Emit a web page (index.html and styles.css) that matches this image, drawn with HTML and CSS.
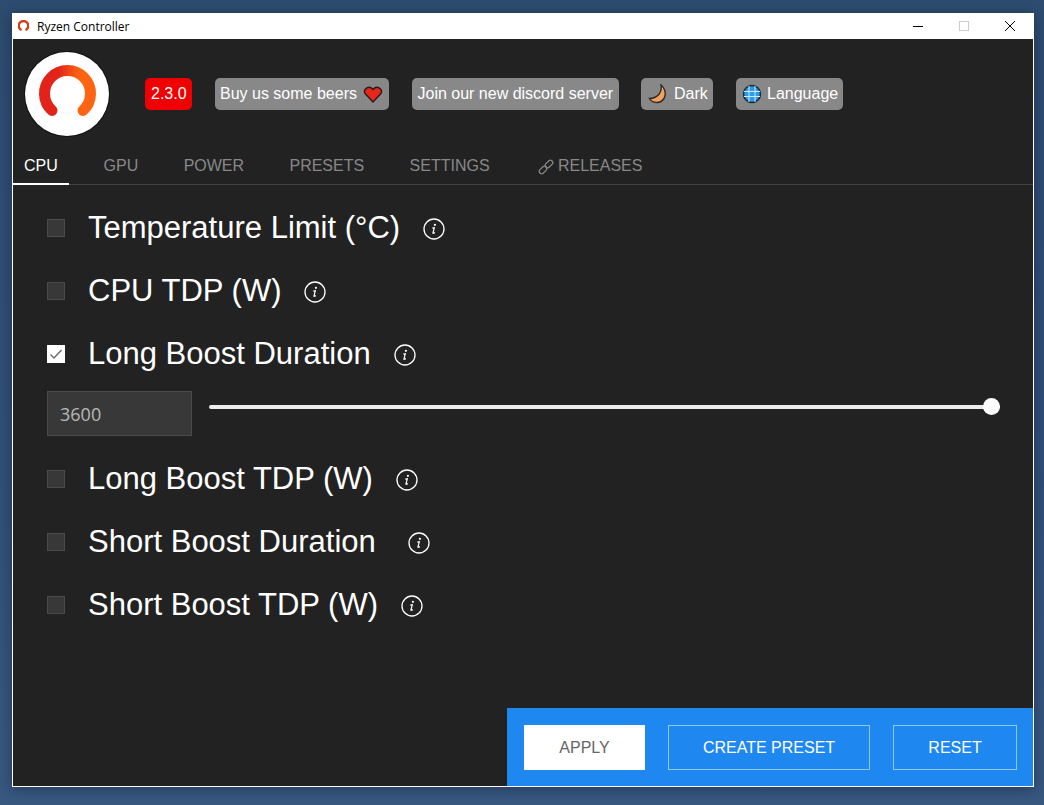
FILE: index.html
```html
<!DOCTYPE html>
<html lang="en">
<head>
<meta charset="utf-8">
<title>Ryzen Controller</title>
<link rel="stylesheet" href="styles.css">
</head>
<body>
<div class="window">
  <div class="titlebar">
    <svg class="title-icon" viewBox="0 0 60 60"><path d="M14 52 A26 26 0 1 1 46 52" fill="none" stroke="#d23c14" stroke-width="13" stroke-linecap="round"/></svg>
    <span class="title-text">Ryzen Controller</span>
    <div class="win-controls">
      <span class="win-btn"><svg width="10" height="10" viewBox="0 0 10 10"><path d="M0 5.5H10" stroke="#000"/></svg></span>
      <span class="win-btn"><svg width="10" height="10" viewBox="0 0 10 10"><rect x=".5" y=".5" width="9" height="9" fill="none" stroke="#ccc"/></svg></span>
      <span class="win-btn"><svg width="10" height="10" viewBox="0 0 10 10"><path d="M0 0L10 10M10 0L0 10" stroke="#000" stroke-width="1"/></svg></span>
    </div>
  </div>
  <header class="header">
    <div class="logo">
      <svg width="84" height="84" viewBox="0 0 84 84">
        <defs><linearGradient id="lg" x1="0" x2="1" y1="0" y2="0"><stop offset="0.3" stop-color="#e2231a"/><stop offset="0.75" stop-color="#ff6412"/></linearGradient></defs>
        <path d="M27 58.5 A23 23 0 1 1 58 58.5" fill="none" stroke="url(#lg)" stroke-width="11" stroke-linecap="round"/>
      </svg>
    </div>
    <div class="badges">
      <span class="badge badge-red">2.3.0</span>
      <span class="badge badge-beers">Buy us some beers
        <svg class="emoji" viewBox="0 0 20 20"><path d="M10 18 L2.3 9.8 C-0.5 5.5 5.8 0.5 10 5.5 C14.2 0.5 20.5 5.5 17.7 9.8 Z" fill="#e8261c" stroke="#2a1a1a" stroke-width="1.4"/></svg>
      </span>
      <span class="badge badge-join">Join our new discord server</span>
      <span class="badge badge-dark">
        <svg class="emoji" viewBox="0 0 20 20"><path d="M14 1 C15.5 8 11 14 2.5 14.5 C5.5 19.5 13.5 20 17 14.5 C19.5 9.5 18 4 14 1 Z" fill="#f7a05a" stroke="#2a2a2a" stroke-width="1.4"/></svg>
        Dark
      </span>
      <span class="badge badge-lang">
        <svg class="emoji" viewBox="0 0 20 20"><circle cx="10" cy="10" r="8.5" fill="#2b9be8" stroke="#1d2a35" stroke-width="1.5"/><path d="M2 7.5H18M2 12.5H18M7 2V18M13 2V18" stroke="#cfeafc" stroke-width="1"/></svg>
        Language
      </span>
    </div>
  </header>
  <nav class="tabs">
    <span class="tab tab-active">CPU</span>
    <span class="tab">GPU</span>
    <span class="tab">POWER</span>
    <span class="tab">PRESETS</span>
    <span class="tab">SETTINGS</span>
    <span class="tab tab-link">
      <svg class="link-icon" viewBox="0 0 16 16"><g fill="none" stroke="#888" stroke-width="1.3" transform="rotate(-45 8 8)"><rect x="-0.5" y="5.6" width="8.5" height="4.8" rx="2.4"/><rect x="8" y="5.6" width="8.5" height="4.8" rx="2.4"/></g></svg>
      RELEASES
    </span>
  </nav>
  <main class="content">
    <div class="row">
      <span class="check"></span><span class="label">Temperature Limit (°C)</span>
      <svg class="info" viewBox="0 0 22 22"><circle cx="11" cy="11" r="10" fill="none" stroke="#fff" stroke-width="1.3"/><circle cx="11.9" cy="6.8" r="1.1" fill="#fff"/><path d="M9.3 10.2 L11.3 9.8 L9.9 15 Q9.8 15.9 11.8 14.4" fill="none" stroke="#fff" stroke-width="1.2"/></svg>
    </div>
    <div class="row">
      <span class="check"></span><span class="label">CPU TDP (W)</span>
      <svg class="info" viewBox="0 0 22 22"><circle cx="11" cy="11" r="10" fill="none" stroke="#fff" stroke-width="1.3"/><circle cx="11.9" cy="6.8" r="1.1" fill="#fff"/><path d="M9.3 10.2 L11.3 9.8 L9.9 15 Q9.8 15.9 11.8 14.4" fill="none" stroke="#fff" stroke-width="1.2"/></svg>
    </div>
    <div class="row">
      <span class="check check-on"><svg width="14" height="14" viewBox="0 0 14 14"><path d="M1.5 7.5L5 11L12.5 3" fill="none" stroke="#666" stroke-width="1.3"/></svg></span><span class="label">Long Boost Duration</span>
      <svg class="info" viewBox="0 0 22 22"><circle cx="11" cy="11" r="10" fill="none" stroke="#fff" stroke-width="1.3"/><circle cx="11.9" cy="6.8" r="1.1" fill="#fff"/><path d="M9.3 10.2 L11.3 9.8 L9.9 15 Q9.8 15.9 11.8 14.4" fill="none" stroke="#fff" stroke-width="1.2"/></svg>
    </div>
    <div class="slider-row">
      <div class="num-input">3600</div>
      <div class="slider"><span class="thumb"></span></div>
    </div>
    <div class="row">
      <span class="check"></span><span class="label">Long Boost TDP (W)</span>
      <svg class="info" viewBox="0 0 22 22"><circle cx="11" cy="11" r="10" fill="none" stroke="#fff" stroke-width="1.3"/><circle cx="11.9" cy="6.8" r="1.1" fill="#fff"/><path d="M9.3 10.2 L11.3 9.8 L9.9 15 Q9.8 15.9 11.8 14.4" fill="none" stroke="#fff" stroke-width="1.2"/></svg>
    </div>
    <div class="row">
      <span class="check"></span><span class="label">Short Boost Duration</span>
      <svg class="info info-wide" viewBox="0 0 22 22"><circle cx="11" cy="11" r="10" fill="none" stroke="#fff" stroke-width="1.3"/><circle cx="11.9" cy="6.8" r="1.1" fill="#fff"/><path d="M9.3 10.2 L11.3 9.8 L9.9 15 Q9.8 15.9 11.8 14.4" fill="none" stroke="#fff" stroke-width="1.2"/></svg>
    </div>
    <div class="row">
      <span class="check"></span><span class="label">Short Boost TDP (W)</span>
      <svg class="info" viewBox="0 0 22 22"><circle cx="11" cy="11" r="10" fill="none" stroke="#fff" stroke-width="1.3"/><circle cx="11.9" cy="6.8" r="1.1" fill="#fff"/><path d="M9.3 10.2 L11.3 9.8 L9.9 15 Q9.8 15.9 11.8 14.4" fill="none" stroke="#fff" stroke-width="1.2"/></svg>
    </div>
  </main>
  <footer class="actions">
    <span class="btn btn-apply">APPLY</span>
    <span class="btn btn-create">CREATE PRESET</span>
    <span class="btn btn-reset">RESET</span>
  </footer>
</div>
</body>
</html>
```
FILE: styles.css
```css
* { box-sizing: border-box; }
html, body { margin: 0; height: 100%; }
body {
  width: 1044px;
  height: 805px;
  overflow: hidden;
  padding: 13px 10px 18px 12px;
  background: linear-gradient(180deg, #2d4c6f 0%, #30507a 60%, #385880 100%);
  font-family: "Liberation Sans", Arial, sans-serif;
}
.window {
  width: 1022px;
  height: 774px;
  display: flex;
  flex-direction: column;
  background: #222;
  border: 1px solid #fff;
  border-top: 0;
  box-shadow: 0 2px 12px rgba(10, 20, 40, .45);
}
.titlebar {
  height: 26px;
  margin: 0 -1px;
  flex: none;
  display: flex;
  align-items: center;
  background: #fff;
  padding-left: 6px;
}
.title-icon { width: 11px; height: 11px; margin-top: -2px; }
.title-text {
  margin-left: 8px;
  font: 12px "Open Sans", "Noto Sans", sans-serif;
  color: #000;
}
.win-controls { margin-left: auto; display: flex; padding-right: 1px; }
.win-btn { width: 46px; height: 26px; display: flex; align-items: center; justify-content: center; }
.header {
  height: 108px;
  flex: none;
  display: flex;
  align-items: center;
  padding-left: 12px;
}
.logo {
  width: 84px;
  height: 84px;
  margin-top: 2px;
  border-radius: 50%;
  background: #fff;
  box-shadow: 0 0 0 1px #111;
}
.logo svg { display: block; }
.badges { display: flex; gap: 23px; margin-left: 36px; margin-top: 2px; }
.badge {
  height: 32px;
  display: flex;
  align-items: center;
  gap: 5px;
  padding: 0 6px;
  border-radius: 5px;
  background: #888;
  color: #fff;
  font-size: 16px;
  white-space: nowrap;
}
.badge-red { background: #f00000; width: 47px; }
.badge-beers { gap: 6px; padding-left: 5px; width: 174px; }
.badge-join { padding: 0 5.5px; width: 207px; }
.badge-dark { gap: 7px; margin-left: -1px; width: 72px; }
.badge-lang { padding-right: 5px; width: 107px; }
.emoji { width: 20px; height: 20px; flex: none; }
.tabs {
  height: 38px;
  flex: none;
  display: flex;
  gap: 23.4px;
  border-bottom: 1px solid #444;
}
.tab {
  height: 37px;
  padding: 0 11px;
  display: flex;
  align-items: center;
  font-size: 16px;
  color: #888;
  white-space: nowrap;
}
.tab-active { color: #fff; border-bottom: 2px solid #fff; height: 38px; padding-top: 1px; margin-right: .4px; }
.tab-link { margin-left: 14px; gap: 4px; padding: 0; }
.link-icon { width: 16px; height: 16px; margin-top: 3px; }
.content { flex: 1; padding: 12px 0 0 34px; }
.row { height: 63px; display: flex; align-items: center; }
.check {
  width: 18px;
  height: 18px;
  flex: none;
  margin-right: 23px;
  margin-top: -2px;
  background: #383838;
  border: 1px solid #4a4a4a;
  display: flex;
  align-items: center;
  justify-content: center;
}
.check-on { background: #fff; border-color: #fff; }
.label { font-size: 31px; color: #fff; white-space: nowrap; margin-top: -2px; }
.info { width: 22px; height: 22px; margin-left: 23px; flex: none; }
.info-wide { margin-left: 32px; }
.slider-row { height: 62px; display: flex; padding-top: 5px; padding-right: 33px; }
.num-input {
  width: 145px;
  height: 45px;
  background: #383838;
  border: 1px solid #4a4a4a;
  padding-left: 12px;
  display: flex;
  align-items: center;
  font: 18px "Open Sans", sans-serif;
  color: #b8b8b8;
}
.slider {
  position: relative;
  flex: 1;
  height: 4px;
  margin: 14px 0 0 17px;
  background: #ededed;
  border-radius: 2px;
}
.thumb {
  position: absolute;
  right: 0;
  top: -7px;
  width: 17px;
  height: 17px;
  border-radius: 50%;
  background: #fff;
}
.actions {
  align-self: flex-end;
  width: 526px;
  height: 78px;
  flex: none;
  display: flex;
  gap: 23px;
  align-items: center;
  padding: 0 16px 0 17px;
  background: #1e88f0;
}
.btn {
  height: 45px;
  padding-top: 1px;
  display: flex;
  align-items: center;
  justify-content: center;
  font-size: 16px;
  color: #fff;
  border: 1px solid #90c8f8;
}
.btn-apply { width: 121px; background: #fff; color: #666; border-color: #fff; }
.btn-create { width: 202px; }
.btn-reset { width: 124px; }
```
